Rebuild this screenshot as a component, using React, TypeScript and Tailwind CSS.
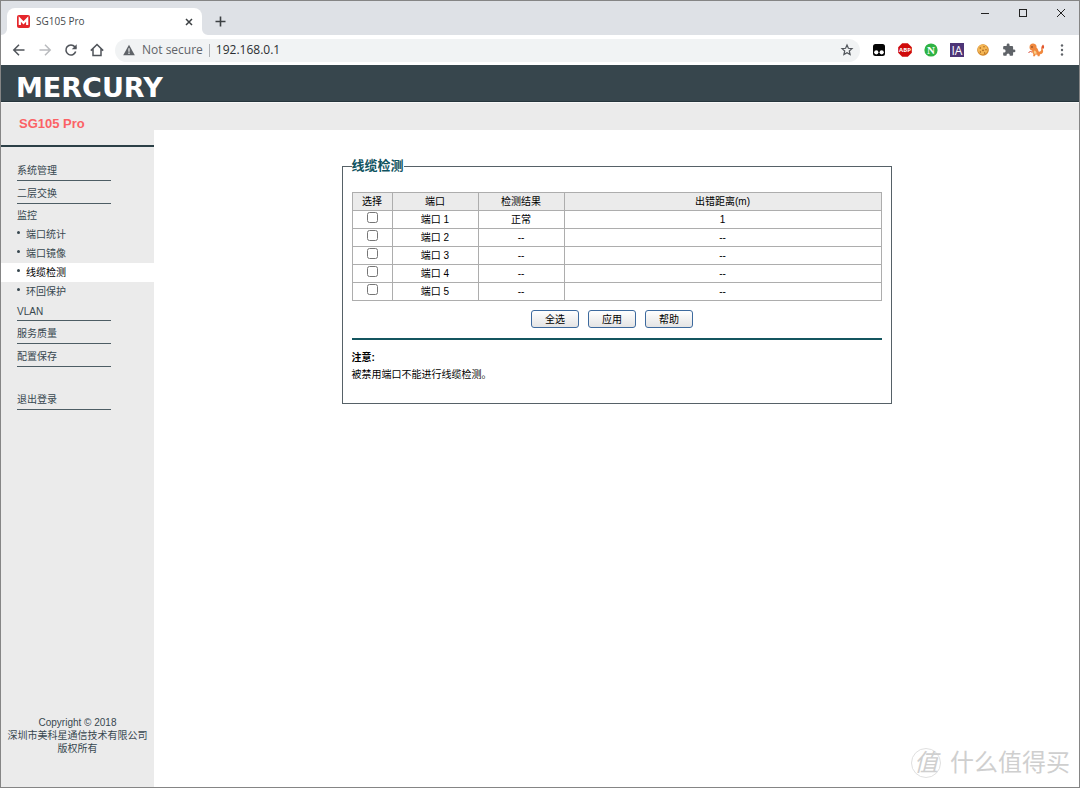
import { useState } from 'react';
import clsx from 'clsx';

interface Port {
  id: number;
  result: string;
  distance: string;
}

interface MenuItem {
  label: string;
  children?: string[];
}

const ports: Port[] = [
  { id: 1, result: '正常', distance: '1' },
  { id: 2, result: '--', distance: '--' },
  { id: 3, result: '--', distance: '--' },
  { id: 4, result: '--', distance: '--' },
  { id: 5, result: '--', distance: '--' },
];

const menu: MenuItem[] = [
  { label: '系统管理' },
  { label: '二层交换' },
  { label: '监控', children: ['端口统计', '端口镜像', '线缆检测', '环回保护'] },
  { label: 'VLAN' },
  { label: '服务质量' },
  { label: '配置保存' },
];

const columns = ['选择', '端口', '检测结果', '出错距离(m)'];

function TabBar() {
  return (
    <div className="flex h-[34px] items-end bg-[#dee1e6] pl-[6px]">
      <div className="relative flex h-[27px] w-[195px] items-center rounded-t-lg bg-white pr-[7px] pl-[10px]">
        <svg className="absolute bottom-0 -left-[6px] h-[6px] w-[6px]" viewBox="0 0 6 6">
          <path d="M6 0v6H0a6 6 0 0 0 6-6z" fill="#fff" />
        </svg>
        <svg className="absolute -right-[6px] bottom-0 h-[6px] w-[6px]" viewBox="0 0 6 6">
          <path d="M0 0v6h6a6 6 0 0 1-6-6z" fill="#fff" />
        </svg>
        <svg className="h-[13px] w-[13px]" viewBox="0 0 13 13">
          <rect width="13" height="13" rx="2" fill="#e5262b" />
          <path d="M2.8 10V4l3.700 3.800L10.200 4v6" fill="none" stroke="#fff" strokeWidth="2.200" />
        </svg>
        <span className="ml-[6px] flex-1 text-[10px] text-[#45494d]">SG105 Pro</span>
        <button aria-label="Close tab" className="p-[2px]">
          <svg className="h-[8px] w-[8px]" viewBox="0 0 8 8" stroke="#3c4043" strokeWidth="1.5">
            <path d="M1 1l6 6M7 1L1 7" />
          </svg>
        </button>
      </div>
      <button aria-label="New tab" className="mb-[8px] ml-[13px]">
        <svg className="h-[11px] w-[11px]" viewBox="0 0 11 11" stroke="#3c4043" strokeWidth="1.6">
          <path d="M5.5 .5v10M.5 5.5h10" />
        </svg>
      </button>
      <div className="mr-[13px] mb-[17px] ml-auto flex items-center gap-[28px]">
        <button aria-label="Minimize">
          <svg className="h-[10px] w-[10px]" viewBox="0 0 10 10" stroke="#222">
            <path d="M1 5.5h8" />
          </svg>
        </button>
        <button aria-label="Maximize">
          <svg className="h-[10px] w-[10px]" viewBox="0 0 10 10" stroke="#222" fill="none">
            <rect x="1.5" y="1.5" width="7" height="7" />
          </svg>
        </button>
        <button aria-label="Close">
          <svg className="h-[10px] w-[10px]" viewBox="0 0 10 10" stroke="#222">
            <path d="M1 1l8 8M9 1L1 9" />
          </svg>
        </button>
      </div>
    </div>
  );
}

function Extensions() {
  return (
    <div className="flex items-center gap-[12px]">
      <button aria-label="Tampermonkey">
        <svg className="h-[14px] w-[14px]" viewBox="0 0 14 14">
          <rect x="1" y="1" width="12" height="12" rx="2.5" fill="#050505" />
          <circle cx="4.3" cy="9.3" r="2.1" fill="#fff" />
          <circle cx="9.7" cy="9.3" r="2.1" fill="#fff" />
        </svg>
      </button>
      <button aria-label="Adblock Plus">
        <svg className="h-[14px] w-[14px]" viewBox="0 0 14 14">
          <path d="M4.2 .2h5.6l4 4v5.6l-4 4H4.2l-4-4V4.2z" fill="#cf0a0a" />
          <text x="7" y="9.2" textAnchor="middle" fontSize="6" fontWeight="700" fill="#fff">
            ABP
          </text>
        </svg>
      </button>
      <button aria-label="N extension">
        <svg className="h-[14px] w-[14px]" viewBox="0 0 14 14">
          <circle cx="7" cy="7" r="6.6" fill="#2fb344" />
          <text x="7" y="10.7" textAnchor="middle" fontSize="11" fontWeight="700" fill="#fff" className="font-['Liberation_Serif',serif]">
            N
          </text>
        </svg>
      </button>
      <button aria-label="IA extension">
        <svg className="h-[14px] w-[14px]" viewBox="0 0 14 14">
          <rect width="14" height="14" fill="#4d3577" />
          <text x="7" y="11.500" textAnchor="middle" fontSize="12" fill="#fff">
            IA
          </text>
        </svg>
      </button>
      <button aria-label="Cookies">
        <svg className="h-[14px] w-[14px]" viewBox="0 0 14 14">
          <circle cx="7" cy="7" r="5.8" fill="#cf8427" />
          <circle cx="6.7" cy="6.5" r="5" fill="#f4b654" />
          <g fill="#a05c1c">
            <circle cx="4.3" cy="5" r=".8" />
            <circle cx="8" cy="3.8" r=".7" />
            <circle cx="7" cy="7.4" r=".8" />
            <circle cx="10" cy="6.8" r=".7" />
            <circle cx="4.4" cy="9" r=".7" />
            <circle cx="8.6" cy="10" r=".7" />
          </g>
        </svg>
      </button>
      <button aria-label="Extensions">
        <svg className="h-[14px] w-[14px]" viewBox="0 0 24 24" fill="#5f6368">
          <path d="M20.5 11H19V7c0-1.1-.9-2-2-2h-4V3.500a2.500 2.500 0 0 0-5 0V5H4c-1.100 0-2 .9-2 2v3.800h1.500a2.700 2.700 0 0 1 0 5.400H2V20c0 1.100.9 2 2 2h3.800v-1.500a2.700 2.700 0 0 1 5.400 0V22H17c1.100 0 2-.9 2-2v-4h1.500a2.500 2.500 0 0 0 0-5z" />
        </svg>
      </button>
      <button aria-label="Profile">
        <svg className="h-[14px] w-[17px]" viewBox="0 0 17 14">
          <path d="M1.500 4.200C1.500 1.800 3.300.4 5.300.6c2.400.2 3.600 2 3.200 4 1 1 1.900 2.600 2.100 4 1.200.3 2.300-.2 2.600-1.600.2-1 .1-2-.2-2.800 1.500 1 2.400 2.800 2.100 4.600-.3 1.500-1.500 2.600-3.100 2.500l-.5 1.900H9.700l-.3-1.500-1.900-.1-.5 1.600H5.100l.3-2.200C4.400 10.100 4 9 4.100 7.600 2.500 7.400 1.500 6 1.500 4.200z" fill="#f0883e" />
          <path d="M6.300 7.500c1.300.2 2.300 1.300 2.300 3.200H6.400c-.8-.9-.9-2.100-.1-3.200z" fill="#f8cf8a" />
          <path d="M13.600 5.400c-.5-1.600.4-2.600 1.400-3.900 1.300 1.500 1.500 3 .5 4.300z" fill="#e2572c" />
          <path d="M.5 9.500l2-1 1.500.6" fill="none" stroke="#d8432e" strokeWidth="1" />
          <circle cx="4" cy="4" r=".7" fill="#4a2512" />
        </svg>
      </button>
      <button aria-label="Menu">
        <svg className="h-[14px] w-[10px]" viewBox="0 0 10 14" fill="#5f6368">
          <circle cx="5" cy="2.500" r="1.200" />
          <circle cx="5" cy="7" r="1.200" />
          <circle cx="5" cy="11.500" r="1.200" />
        </svg>
      </button>
    </div>
  );
}

function Toolbar() {
  return (
    <div className="flex h-[30px] items-center bg-white pr-[12px] pl-[11px]">
      <div className="flex items-center gap-[12px]">
        <button aria-label="Back">
          <svg className="h-[14px] w-[14px]" viewBox="0 0 14 14" fill="none" stroke="#50545a" strokeWidth="1.500">
            <path d="M12.500 7H2M7 1.800L1.800 7 7 12.200" />
          </svg>
        </button>
        <button aria-label="Forward">
          <svg className="h-[14px] w-[14px]" viewBox="0 0 14 14" fill="none" stroke="#b9bbbe" strokeWidth="1.500">
            <path d="M1.500 7H12M7 1.800L12.200 7 7 12.200" />
          </svg>
        </button>
        <button aria-label="Reload">
          <svg className="h-[14px] w-[14px]" viewBox="0 0 14 14" fill="none" stroke="#50545a" strokeWidth="1.600">
            <path d="M11.700 8.600A5 5 0 1 1 10.800 3.800l1.200 1.400" />
            <path d="M12.700 1.300v4.900H7.800z" fill="#50545a" stroke="none" />
          </svg>
        </button>
        <button aria-label="Home">
          <svg className="h-[14px] w-[14px]" viewBox="0 0 14 14" fill="none" stroke="#50545a" strokeWidth="1.500">
            <path d="M.8 7.600L7 1.500l6.200 6.100M3 6v6.500h8V6" />
          </svg>
        </button>
      </div>
      <div className="mr-[12px] ml-[11px] flex h-[23px] flex-1 items-center rounded-full bg-[#f1f3f4] pr-[6px] pl-[8px]">
        <svg className="h-[12px] w-[12px]" viewBox="0 0 12 12">
          <path d="M6 .8L11.800 11.200H.2z" fill="#5f6368" />
          <path d="M6 4.300v3.400M6 8.600v1.300" stroke="#f1f3f4" strokeWidth="1.200" />
        </svg>
        <span className="ml-[7px] text-[12px] text-[#5f6368]">Not secure</span>
        <span className="mx-[6px] h-[13px] w-px bg-[#aeb1b5]" />
        <input
          aria-label="Address"
          defaultValue="192.168.0.1"
          className="min-w-0 flex-1 bg-transparent text-[12px] text-[#2b2e31] outline-none"
        />
        <button aria-label="Bookmark this page">
          <svg className="h-[14px] w-[14px]" viewBox="0 0 14 14" fill="none" stroke="#50545a" strokeWidth="1.200">
            <path d="M7 2l1.400 3.300 3.600.3-2.700 2.400.8 3.500L7 9.700l-3.100 1.800.8-3.500L2 5.600l3.600-.3z" />
          </svg>
        </button>
      </div>
      <Extensions />
    </div>
  );
}

function Sidebar() {
  const [current, setCurrent] = useState('线缆检测');

  return (
    <aside className="flex w-[153px] shrink-0 flex-col bg-[#ebebeb] text-[10px] text-[#37474f]">
      <nav className="mt-[15px] border-t-2 border-[#2b3f46] pt-[11px]">
        <ul>
          {menu.map((item) => (
            <li key={item.label}>
              <a
                href="#"
                className={clsx(
                  'ml-[16px] flex w-[94px] items-center pt-[2px]',
                  item.children ? 'h-[21px]' : 'border-b border-[#4d5d64]',
                  !item.children && (item.label === 'VLAN' ? 'h-[20px]' : 'h-[23px]'),
                )}
              >
                {item.label}
              </a>
              {item.children && (
                <ul>
                  {item.children.map((child) => (
                    <li key={child} className={clsx('h-[19px]', child === current && 'bg-white text-black')}>
                      <a href="#" onClick={() => setCurrent(child)} className="flex h-full items-center pl-[16px]">
                        <span className="mr-[6px] mb-[4px] h-[3px] w-[3px] rounded-full bg-[#37474f]" />
                        {child}
                      </a>
                    </li>
                  ))}
                </ul>
              )}
            </li>
          ))}
        </ul>
        <a href="#" className="mt-[20px] ml-[16px] flex h-[23px] w-[94px] items-center border-b border-[#4d5d64] pt-[2px]">
          退出登录
        </a>
      </nav>
      <footer className="mt-auto pb-[32px] text-center leading-[13px]">
        <p>Copyright © 2018</p>
        <p>深圳市美科星通信技术有限公司</p>
        <p>版权所有</p>
      </footer>
    </aside>
  );
}

function CableTest() {
  const [selected, setSelected] = useState<number[]>([]);

  const toggle = (id: number) => {
    setSelected(selected.includes(id) ? selected.filter((s) => s !== id) : [...selected, id]);
  };

  const buttonClass =
    'h-[18px] w-[48px] rounded-[3px] border border-[#3d6a9e] bg-gradient-to-b from-white to-[#e4e4e4] pt-[2px] text-[10px] leading-[14px]';

  return (
    <fieldset className="w-full max-w-[550px] border border-[#566167] px-[9px] pb-[20px] text-[10px] text-black">
      <legend className="text-[13px] leading-[20px] font-bold text-[#0f5360]">线缆检测</legend>
      <table className="mt-[16px] w-full table-fixed border-collapse text-center leading-[17px]">
        <thead>
          <tr className="h-[18px] bg-[#ebebeb]">
            {columns.map((column, index) => (
              <th
                key={column}
                className={clsx(
                  'border border-[#adadad] p-0 font-normal',
                  index === 0 && 'w-[40px]',
                  (index === 1 || index === 2) && 'w-[86px]',
                )}
              >
                {column}
              </th>
            ))}
          </tr>
        </thead>
        <tbody>
          {ports.map((port) => (
            <tr key={port.id} className="h-[18px]">
              <td className="border border-[#adadad] p-0">
                <input
                  type="checkbox"
                  aria-label={`端口 ${port.id}`}
                  checked={selected.includes(port.id)}
                  onChange={() => toggle(port.id)}
                  className="mx-auto mb-[5px] block h-[11px] w-[11px]"
                />
              </td>
              <td className="border border-[#adadad] p-0">端口 {port.id}</td>
              <td className="border border-[#adadad] p-0">{port.result}</td>
              <td className="border border-[#adadad] p-0">{port.distance}</td>
            </tr>
          ))}
        </tbody>
      </table>
      <div className="mt-[9px] flex justify-center gap-[9px] pr-[9px]">
        <button type="button" className={buttonClass} onClick={() => setSelected(ports.map((p) => p.id))}>
          全选
        </button>
        <button type="button" className={buttonClass}>
          应用
        </button>
        <button type="button" className={buttonClass}>
          帮助
        </button>
      </div>
      <hr className="mt-[10px] border-t-2 border-[#14555f]" />
      <div className="mt-[9px] leading-[17px]">
        <p className="font-bold">注意:</p>
        <p>被禁用端口不能进行线缆检测。</p>
      </div>
    </fieldset>
  );
}

export default function App() {
  return (
    <div className="relative flex min-h-screen flex-col border border-[#858585] bg-white font-['Liberation_Sans','Noto_Sans_CJK_SC',sans-serif]">
      <div className="font-['Open_Sans','Noto_Sans',sans-serif]">
        <TabBar />
        <Toolbar />
      </div>
      <header className="flex h-[37px] items-center border-b border-[#26353c] bg-[#37464d] pt-[8px] pl-[15px]">
        <span className="font-['DejaVu_Sans',sans-serif] text-[27px] leading-[27px] font-bold text-white">MERCURY</span>
      </header>
      <div className="flex h-[28px] items-end border-t border-[#f8f8f8] bg-[#ebebeb] pl-[18px]">
        <h1 className="text-[13px] leading-[12px] font-bold text-[#fb6265]">SG105 Pro</h1>
      </div>
      <div className="flex flex-1">
        <Sidebar />
        <main className="flex flex-1 items-start justify-center pt-[26px]">
          <CableTest />
        </main>
      </div>
      <div className="absolute right-[9px] bottom-[9px] flex items-center gap-[9px] text-[#cfcfcf]">
        <span className="flex h-[30px] w-[30px] items-center justify-center rounded-full border border-[#e0e0e0] text-[24px] leading-[24px] italic">
          值
        </span>
        <span className="text-[24px] leading-[30px]">什么值得买</span>
      </div>
    </div>
  );
}
